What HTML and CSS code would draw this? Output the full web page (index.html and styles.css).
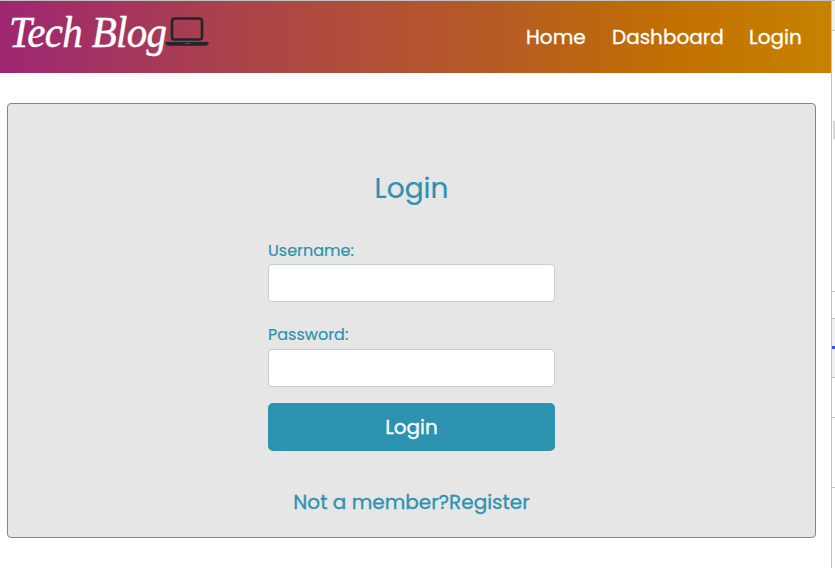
FILE: index.html
```html
<!DOCTYPE html>
<html lang="en">
<head>
<meta charset="utf-8">
<title>Tech Blog</title>
<link rel="stylesheet" href="styles.css">
</head>
<body>
<div class="page">
  <header class="navbar">
    <a class="brand"><span class="brand-name">Tech Blog</span><svg class="laptop" viewBox="0 0 44 30" width="44" height="30"><rect x="7" y="2.5" width="30" height="21" rx="2.5" fill="none" stroke="#212529" stroke-width="2.6"/><path d="M0.5 26H43.5V27.5Q43 29.8 40 29.8H4Q1 29.8 0.5 27.5Z" fill="#212529"/><path d="M20 27.5h5" stroke="#8a3552" stroke-width="1"/></svg></a>
    <nav class="links">
      <a class="home">Home</a>
      <a class="dashboard">Dashboard</a>
      <a class="login">Login</a>
    </nav>
  </header>
  <main class="card">
    <form class="form">
      <h1>Login</h1>
      <label for="username">Username:</label>
      <input id="username" type="text">
      <label class="second" for="password">Password:</label>
      <input id="password" type="password">
      <button type="button">Login</button>
      <p class="register">Not a member?<a>Register</a></p>
    </form>
  </main>
</div>
<aside class="edge">
  <div class="toolbar"></div>
  <div class="content"><i></i></div>
  <div class="row"></div>
  <div class="selected"><i></i></div>
  <div class="row short"></div>
  <div class="row tall"></div>
</aside>
</body>
</html>
```
FILE: styles.css
```css
* { box-sizing: border-box; }
body {
  margin: 0;
  height: 568px;
  display: flex;
  overflow: hidden;
  border-top: 1px solid #c2c2c2;
  background: #fff;
  color: #2c92b0;
  font-family: Poppins, Inter, sans-serif;
}
.page { width: 831px; }
.navbar {
  height: 72px;
  display: flex;
  justify-content: space-between;
  background: linear-gradient(90deg, #9e2672 0%, #ab414c 27%, #b75c23 61%, #c17000 81%, #c88200 100%);
}
.brand { display: flex; padding-left: 9px; }
.brand-name {
  width: 156px;
  height: 59px;
  padding-top: 6px;
  color: #fff;
  font: italic 41px/52px "Apple Chancery", "URW Chancery L", Z003, "Monotype Corsiva", "Liberation Serif", serif;
  letter-spacing: -.7px;
  white-space: nowrap;
  -webkit-text-stroke: .4px #fff;
  transform: scaleY(1.08);
  transform-origin: 0 46px;
}
.laptop { margin-top: 15px; }
.links {
  display: flex;
  padding: 21px 29px 0 0;
  color: #fff;
  font-size: 20px;
  line-height: 30px;
  white-space: nowrap;
  -webkit-text-stroke: .3px currentColor;
}
.home { width: 86px; }
.dashboard { width: 137px; }
.login { width: 53px; }
.card {
  width: 809px;
  height: 435px;
  margin: 30px 0 0 7px;
  padding-top: 65px;
  border: 1px solid #858585;
  border-radius: 4px;
  background: #e6e6e6;
}
.form { width: 287px; margin: 0 auto; display: flex; flex-direction: column; }
h1 {
  margin: 0;
  font-size: 28px;
  font-weight: 400;
  line-height: 40px;
  text-align: center;
  -webkit-text-stroke: .2px currentColor;
}
label { margin-top: 30px; font-size: 16px; line-height: 24px; -webkit-text-stroke: .2px currentColor; }
label.second { margin-top: 21px; }
input {
  height: 38px;
  margin: 1px 0 0;
  padding: 0 12px;
  border: 1px solid #c8ccd6;
  border-radius: 4px;
  background: #fff;
}
label.second + input { margin-top: 2px; }
button {
  height: 48px;
  margin-top: 16px;
  padding: 0;
  border: 0;
  border-radius: 5px;
  background: #2c92b0;
  color: #fff;
  font: 400 20px/48px Poppins, Inter, sans-serif;
  -webkit-text-stroke: .3px currentColor;
}
.register {
  margin: 36px 0 0;
  font-size: 20px;
  line-height: 30px;
  text-align: center;
  white-space: nowrap;
  -webkit-text-stroke: .3px currentColor;
}
.edge { width: 4px; border-left: 1px solid #bfc3ca; }
.edge div { border-bottom: 1px solid #bfc3ca; }
.toolbar { height: 30px; background: #f0f1f3; }
.content { height: 261px; padding-top: 90px; }
.content i { display: block; height: 18px; margin-left: 1px; background: #d8d8d8; }
.row { height: 27px; }
.selected { height: 59px; padding-top: 27px; background: #f0f1f3; }
.selected i { display: block; height: 3px; background: #4050f0; }
.edge .short { height: 40px; }
.edge .tall { height: 70px; }
```
